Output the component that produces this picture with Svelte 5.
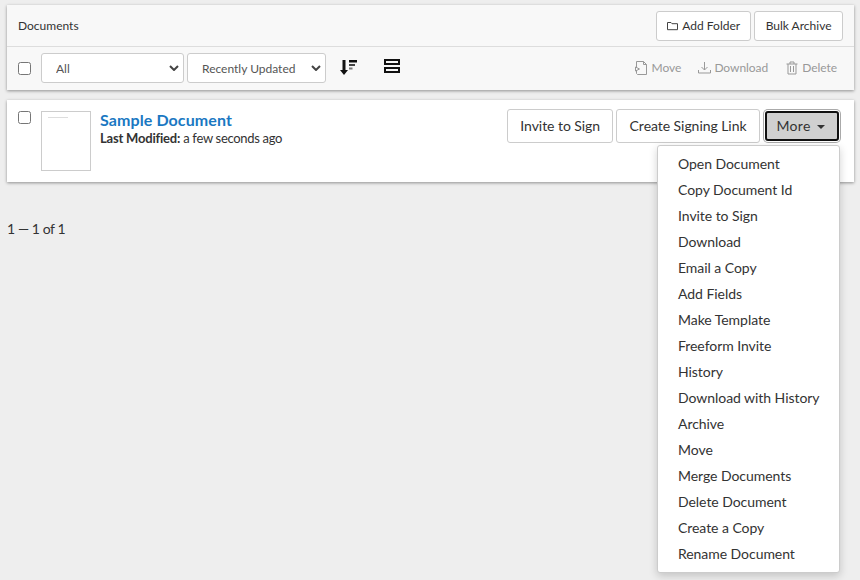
<script>
  const menuItems = [
    "Open Document", "Copy Document Id", "Invite to Sign", "Download", "Email a Copy", "Add Fields",
    "Make Template", "Freeform Invite", "History", "Download with History", "Archive", "Move",
    "Merge Documents", "Delete Document", "Create a Copy", "Rename Document"
  ];
</script>

<div class="page">
  <div class="panel">
    <div class="head">
      <span class="title">Documents</span>
      <div class="head-btns">
        <button class="btn small folder">
          <svg width="13" height="12" viewBox="0 0 13 12" fill="none" stroke="#444" stroke-width="1"><path d="M1.5 2.5h3.5l1 1.2h5.5v6h-10z" /></svg>
          Add Folder
        </button>
        <button class="btn small bulk">Bulk Archive</button>
      </div>
    </div>
    <div class="toolbar">
      <input type="checkbox" class="check" />
      <div class="sel-wrap all">
        <select class="sel"><option>All</option></select>
        <svg class="chev" width="10" height="6" viewBox="0 0 10 6" fill="none" stroke="#444" stroke-width="2"><path d="M1 1l4 4 4-4" /></svg>
      </div>
      <div class="sel-wrap recent">
        <select class="sel"><option>Recently Updated</option></select>
        <svg class="chev" width="10" height="6" viewBox="0 0 10 6" fill="none" stroke="#444" stroke-width="2"><path d="M1 1l4 4 4-4" /></svg>
      </div>
      <svg class="sort" width="17" height="15" viewBox="0 0 17 15" fill="#111"><path d="M2.5 0h3v10H8l-4 5-4-5h2.500z" /><path d="M9 0h8v2.500H9z" /><path d="M9 4h6v2H9z" fill="#444" /><path d="M9 7.500h3.500v2H9z" fill="#777" /></svg>
      <svg class="rows" width="16" height="14" viewBox="0 0 16 14" fill="none" stroke="#111" stroke-width="2"><path d="M1 1h14v4H1zM1 9h14v4H1z" /></svg>
      <div class="actions">
        <span>
          <svg width="13" height="14" viewBox="0 0 13 14" fill="none" stroke="#999"><path d="M1.500 6V.5h7l3 3v10h-9l-1-1V10M.5 6l4 2-4 2zM8.500.5v3h3" /></svg>
          Move
        </span>
        <span class="dl">
          <svg width="13" height="13" viewBox="0 0 13 13" fill="none" stroke="#999"><path d="M6.500 1v8M3.500 6l3 3 3-3M.5 9v3h12V9" /></svg>
          Download
        </span>
        <span>
          <svg width="12" height="14" viewBox="0 0 12 14" fill="none" stroke="#999"><path d="M.5 3h11M4 3V1h4v2M2 3v10h8V3M4.500 5v6M7.500 5v6" /></svg>
          Delete
        </span>
      </div>
    </div>
  </div>

  <div class="doc">
    <input type="checkbox" class="check doc-check" />
    <div class="thumb"><div class="thumb-line"></div></div>
    <div class="info">
      <div class="name">Sample Document</div>
      <div class="modified"><b>Last Modified:</b> a few seconds ago</div>
    </div>
    <div class="doc-btns">
      <button class="btn">Invite to Sign</button>
      <button class="btn signing">Create Signing Link</button>
      <div class="more-wrap">
        <button class="btn more">More <span class="caret"></span></button>
        <ul class="menu">
          {#each menuItems as item}
            <li>{item}</li>
          {/each}
        </ul>
      </div>
    </div>
  </div>

  <div class="pager">1 — 1 of 1</div>
</div>

<style>
  :global(body) {
    margin: 0;
    background: #eeeeee;
    font-family: Lato, sans-serif;
    color: #333;
  }
  .page {
    height: 580px;
    padding: 5px 6px 0 7px;
    box-sizing: border-box;
    overflow: hidden;
  }
  .panel {
    background: #f8f8f8;
    box-shadow: 0 1px 3px rgba(0, 0, 0, 0.4);
  }
  .head {
    height: 41px;
    display: flex;
    align-items: center;
    justify-content: space-between;
    padding: 0 11px;
    border-bottom: 1px solid #ddd;
  }
  .title {
    font-size: 12px;
  }
  .head-btns {
    display: flex;
    gap: 3px;
  }
  .btn {
    font-family: Lato, sans-serif;
    font-size: 14px;
    color: #333;
    background: #fff;
    border: 1px solid #ccc;
    border-radius: 3px;
    height: 34px;
    padding: 0 12px 2px;
    letter-spacing: -0.05px;
  }
  .btn.small {
    font-size: 12px;
    height: 30px;
    padding: 0 10px;
    display: flex;
    align-items: center;
    gap: 3px;
    letter-spacing: 0;
  }
  .btn.folder {
    padding-left: 9.5px;
  }
  .btn.bulk {
    padding: 0 10.5px;
  }
  .btn.signing {
    padding: 0 12.5px 2px;
  }
  .toolbar {
    height: 43px;
    display: flex;
    align-items: center;
    padding: 0 11px 2px;
    box-sizing: border-box;
    font-size: 12px;
  }
  .check {
    width: 13px;
    height: 13px;
    margin: 0;
  }
  .toolbar .check {
    margin-top: 2px;
  }
  .sel-wrap {
    position: relative;
    height: 30px;
  }
  .sel {
    width: 100%;
    height: 100%;
    appearance: none;
    border: 1px solid #ccc;
    border-radius: 3px;
    background: #fff;
    font-family: Lato, sans-serif;
    font-size: 12px;
    color: #555;
    padding: 2px 0 0 14px;
  }
  .chev {
    position: absolute;
    right: 5px;
    top: 12px;
  }
  .all {
    width: 143px;
    margin-left: 10px;
  }
  .recent {
    width: 139px;
    margin-left: 3px;
  }
  .sort {
    margin-left: 14px;
    margin-top: -1px;
  }
  .rows {
    margin-left: 27px;
    margin-top: -3px;
  }
  .actions {
    margin-left: auto;
    margin-right: 6px;
    display: flex;
    gap: 17px;
    color: #999;
    letter-spacing: -0.05px;
  }
  .actions span {
    display: flex;
    align-items: center;
    gap: 4px;
  }
  .actions .dl {
    gap: 3px;
    margin-right: 1px;
  }
  .doc {
    margin-top: 10px;
    height: 82px;
    background: #fff;
    box-shadow: 0 1px 3px rgba(0, 0, 0, 0.4);
    display: flex;
    align-items: flex-start;
    padding: 11px 14px 0 11px;
    box-sizing: border-box;
  }
  .thumb {
    width: 48px;
    height: 58px;
    border: 1px solid #ccc;
    margin-left: 10px;
    background: #fff;
  }
  .thumb-line {
    width: 20px;
    height: 1px;
    background: #ddd;
    margin: 5px 0 0 6px;
  }
  .info {
    margin-left: 9px;
    margin-top: -1px;
  }
  .name {
    font-size: 16px;
    font-weight: 700;
    color: #1a78c2;
    line-height: 20px;
    letter-spacing: 0.1px;
  }
  .modified {
    font-size: 13px;
    line-height: 16px;
    letter-spacing: -0.3px;
  }
  .modified b {
    font-weight: 700;
    letter-spacing: -0.2px;
  }
  .doc-btns {
    margin-left: auto;
    display: flex;
    gap: 3px;
    margin-top: -2px;
  }
  .more-wrap {
    position: relative;
    margin-left: 1px;
  }
  .more {
    padding: 0 3px 2px 0;
    background: #d0d0d0;
    border: 2px solid #111;
    box-shadow: 0 0 0 1px #fff, 0 0 0 2px #aaa;
    height: 30px;
    margin: 2px 1px 0;
    width: 74px;
    letter-spacing: 0.3px;
  }
  .caret {
    display: inline-block;
    margin-left: 2px;
    vertical-align: middle;
    border-top: 4px solid #333;
    border-left: 4.5px solid transparent;
    border-right: 4.5px solid transparent;
  }
  .menu {
    position: absolute;
    top: 36px;
    right: 0;
    width: 183px;
    margin: 0;
    padding: 5px 0;
    list-style: none;
    background: #fff;
    border: 1px solid #ccc;
    border-radius: 3px;
    box-shadow: 0 3px 8px rgba(0, 0, 0, 0.18);
    font-size: 14px;
    box-sizing: border-box;
    letter-spacing: -0.05px;
  }
  .menu li {
    height: 26px;
    line-height: 26px;
    padding-left: 20px;
  }
  .pager {
    margin-top: 38px;
    font-size: 14px;
    letter-spacing: -0.4px;
  }
</style>
